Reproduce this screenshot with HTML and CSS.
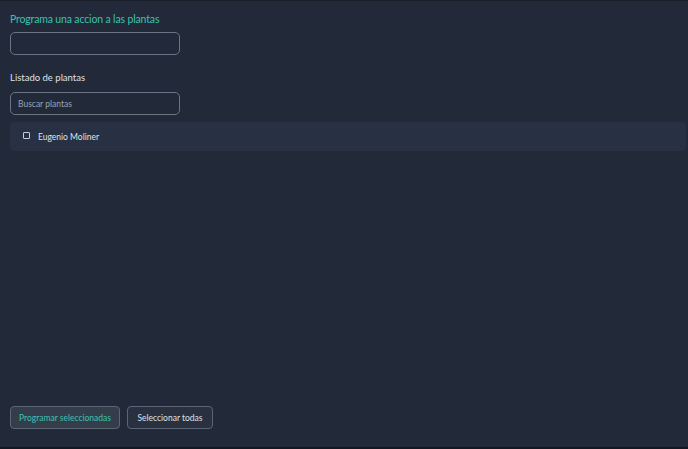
FILE: index.html
```html
<!DOCTYPE html>
<html lang="es">
<head>
<meta charset="utf-8">
<link rel="stylesheet" href="styles.css">
<title>Programa</title>
</head>
<body>
<div class="app">
  <main class="panel">
    <h1 class="title">Programa una accion a las plantas</h1>
    <input class="field" type="text">
    <label class="label">Listado de plantas</label>
    <input class="field search" type="text" placeholder="Buscar plantas">
    <ul class="list">
      <li class="row"><span class="check"></span><span class="name">Eugenio Moliner</span></li>
    </ul>
    <div class="spacer"></div>
    <div class="actions">
      <button class="btn primary">Programar seleccionadas</button>
      <button class="btn">Seleccionar todas</button>
    </div>
  </main>
  <div class="footer"></div>
</div>
</body>
</html>
```
FILE: styles.css
```css
* { box-sizing: border-box; }
html, body { margin: 0; height: 100%; }
body {
  background: #222938;
  font-family: Lato, "Noto Sans", sans-serif;
  color: #d9dee6;
}
.app {
  height: 449px;
  display: flex;
  flex-direction: column;
  border-top: 1px solid #1b202b;
}
.panel {
  flex: 1;
  display: flex;
  flex-direction: column;
  padding: 10px 0 0 10px;
}
.title {
  margin: 0;
  font-size: 10.5px;
  letter-spacing: -0.15px;
  font-weight: 400;
  color: #3bc2b0;
  line-height: 16px;
}
.field {
  width: 170px;
  height: 23px;
  margin-top: 5px;
  background: transparent;
  border: 1px solid #6b7487;
  border-radius: 5px;
  color: #d9dee6;
  font: inherit;
  font-size: 8.5px;
  letter-spacing: 0;
  padding: 0 7px;
  outline: none;
}
.field::placeholder { color: #9ba3af; }
.label {
  margin-top: 16px;
  font-size: 9.5px;
  line-height: 14px;
  color: #dfe3ea;
}
.search { margin-top: 7px; }
.list {
  list-style: none;
  margin: 7px 2px 0 0;
  padding: 0;
}
.row {
  height: 29px;
  background: #283043;
  border-radius: 4px;
  display: flex;
  align-items: center;
  padding-left: 13px;
  gap: 8px;
}
.check {
  width: 7px;
  height: 7px;
  border: 1.5px solid #c9ced6;
  border-radius: 1px;
  margin-top: -2px;
}
.name {
  font-size: 8.5px;
  color: #dfe3ea;
}
.spacer { flex: 1; }
.actions {
  display: flex;
  gap: 7px;
  margin-bottom: 18px;
}
.btn {
  height: 23px;
  padding: 0;
  background: #293140;
  border: 1px solid #5b6574;
  border-radius: 4px;
  color: #dde2ea;
  font: inherit;
  font-size: 8.5px;
  white-space: nowrap;
}
.btn.primary {
  background: #343e4b;
  color: #3bc2b0;
  width: 110px;
}
.btn:not(.primary) { width: 86px; }
.footer {
  height: 2px;
  background: #131820;
}
```
